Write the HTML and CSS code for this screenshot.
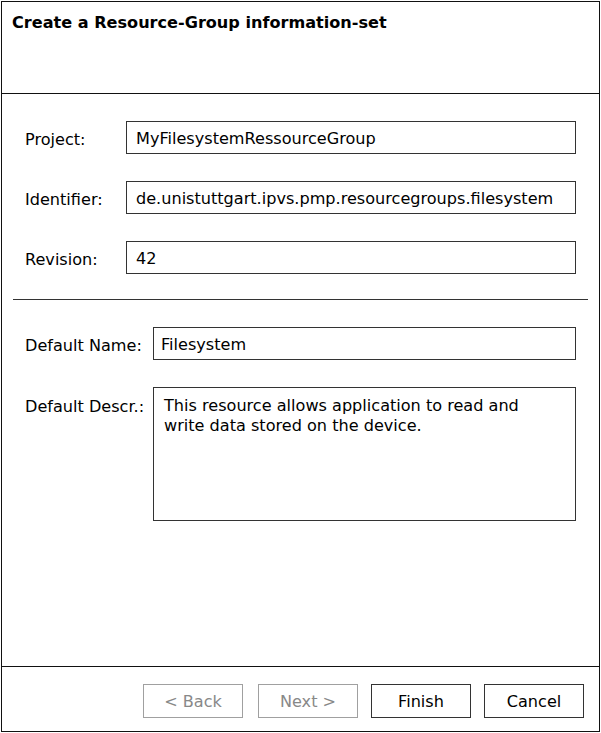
FILE: index.html
```html
<!DOCTYPE html>
<html lang="en">
<head>
  <meta charset="UTF-8" />
  <title>Create a Resource-Group information-set</title>
  <link rel="stylesheet" href="styles.css">
</head>
<body>
  <div class="wizard">
    <div class="wizard-header">
      <h1 class="wizard-title">Create a Resource-Group information-set</h1>
    </div>

    <div class="wizard-body">
      <div class="fields fields-top">
        <label for="project">Project:</label>
        <input type="text" id="project" class="field" value="MyFilesystemRessourceGroup" />

        <label for="identifier">Identifier:</label>
        <input type="text" id="identifier" class="field" value="de.unistuttgart.ipvs.pmp.resourcegroups.filesystem" />

        <label for="revision">Revision:</label>
        <input type="text" id="revision" class="field" value="42" />
      </div>

      <hr class="divider" />

      <div class="fields fields-bottom">
        <label for="defName">Default Name:</label>
        <input type="text" id="defName" class="field field-name" value="Filesystem" />

        <label for="defDescr" class="label-top">Default Descr.:</label>
        <textarea id="defDescr" class="field field-area">This resource allows application to read and write data stored on the device.</textarea>
      </div>
    </div>

    <div class="wizard-footer">
      <button class="btn" disabled>&lt; Back</button>
      <button class="btn btn-next" disabled>Next &gt;</button>
      <button class="btn">Finish</button>
      <button class="btn">Cancel</button>
    </div>
  </div>
</body>
</html>
```

FILE: styles.css
```css
body {
  margin: 0;
  padding-top: 1px;
  font-family: 'DejaVu Sans', sans-serif;
  font-size: 16.1px;
  color: #000;
  background: #fff;
}

.wizard {
  box-sizing: border-box;
  margin-left: 1px;
  width: 599px;
  height: 731px;
  border: 1px solid #111;
  display: flex;
  flex-direction: column;
}

.wizard-header {
  height: 92px;
  border-bottom: 1px solid #111;
  padding: 11px 10px 0;
  box-sizing: border-box;
  flex-shrink: 0;
}

.wizard-title {
  margin: 0;
  font-size: 16.1px;
  font-weight: 700;
  line-height: 19px;
}

.wizard-body {
  flex-grow: 1;
  padding: 27px 11px 0;
}

.fields {
  display: grid;
  align-items: center;
  row-gap: 27px;
  padding: 0 12px;
}

.fields-top {
  grid-template-columns: 101px 1fr;
}

.fields-bottom {
  grid-template-columns: 128px 1fr;
}

label {
  white-space: nowrap;
  padding-top: 3px;
}

.label-top {
  align-self: start;
  padding-top: 10px;
}

.field {
  box-sizing: border-box;
  height: 33px;
  width: 100%;
  margin: 0;
  border: 1px solid #333;
  padding: 2px 9px 0;
  font-family: 'DejaVu Sans', sans-serif;
  font-size: 16.1px;
  color: #000;
  background: #fff;
  outline: none;
}

.field-name {
  padding: 2px 7px 0;
}

.field-area {
  height: 134px;
  padding: 8px 30px 0 10px;
  line-height: 20px;
  resize: none;
  overflow: hidden;
}

.divider {
  margin: 25px 0 27px;
  border: none;
  border-top: 1px solid #333;
  height: 0;
}

.wizard-footer {
  flex-shrink: 0;
  border-top: 1px solid #111;
  display: flex;
  justify-content: flex-end;
  gap: 13px;
  padding: 17px 15px 13px;
}

.btn {
  box-sizing: border-box;
  width: 100px;
  height: 34px;
  margin: 0;
  border: 1px solid #333;
  background: #fff;
  color: #000;
  font-family: 'DejaVu Sans', sans-serif;
  font-size: 16.1px;
  padding: 0;
}

.btn:disabled {
  border-color: #a0a0a0;
  color: #888;
}

.btn-next {
  margin-left: 2px;
}
```
